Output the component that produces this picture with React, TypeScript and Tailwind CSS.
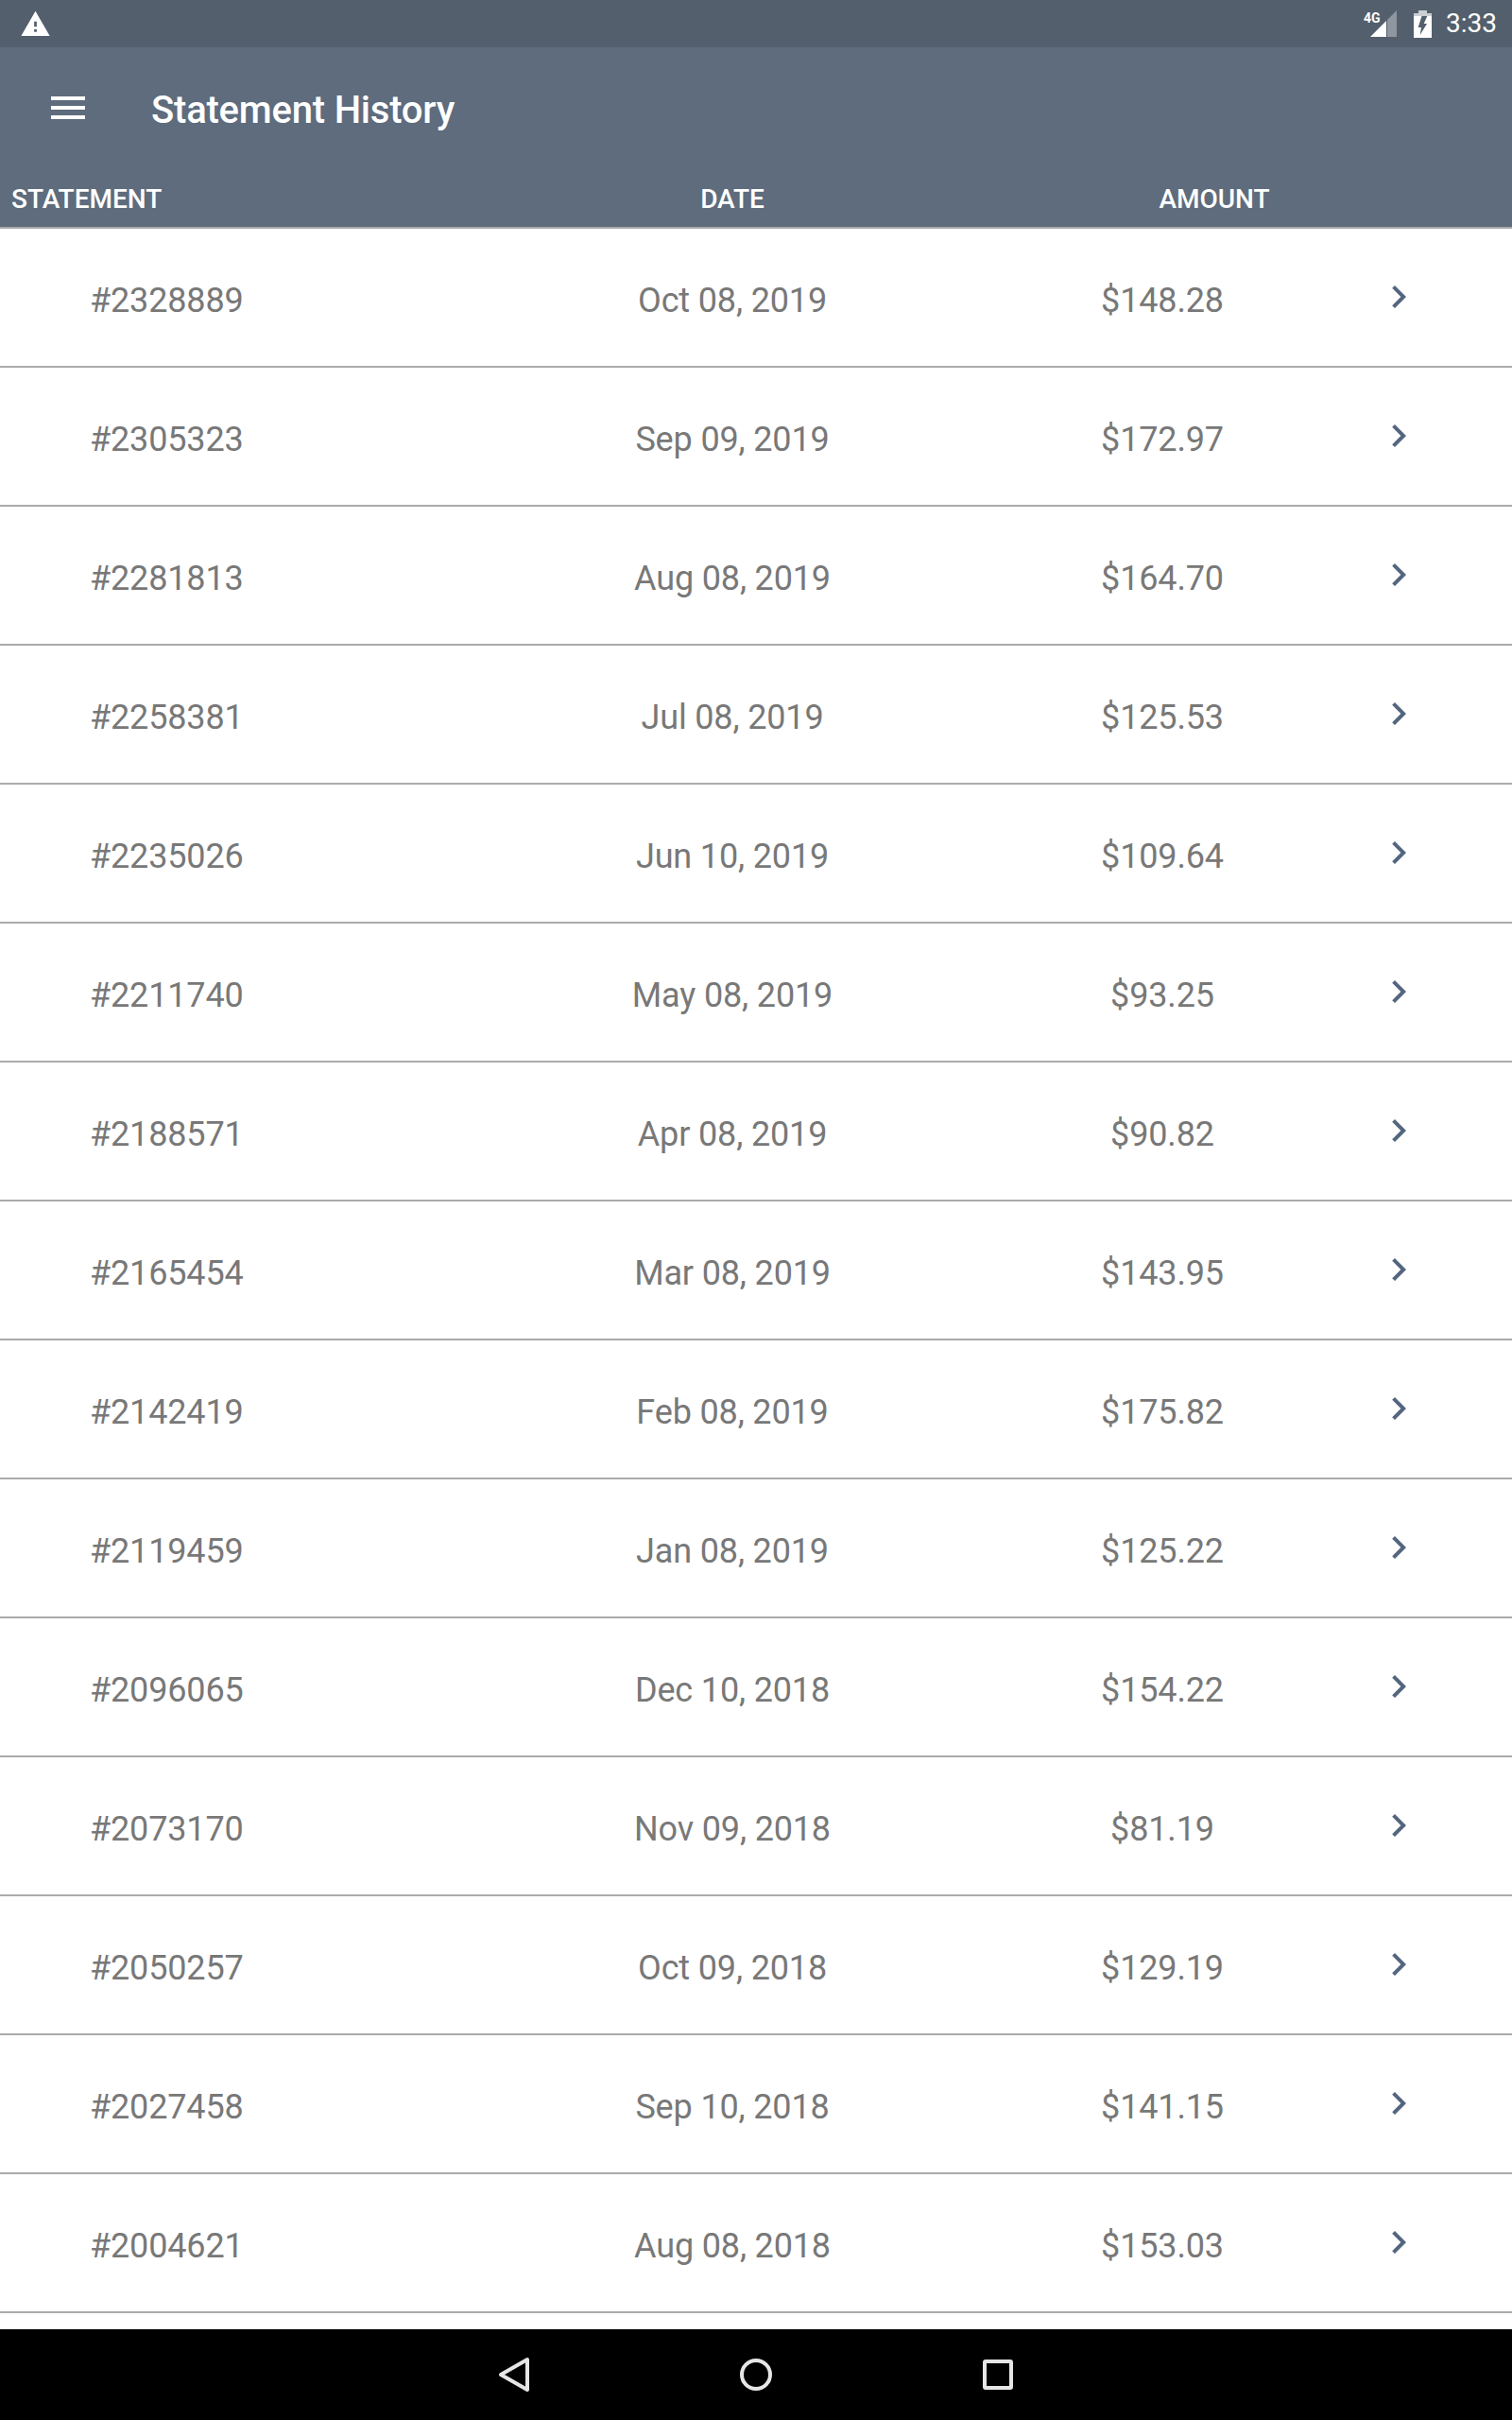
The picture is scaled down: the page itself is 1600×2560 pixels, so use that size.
const statements = [
  { id: "#2328889", date: "Oct 08, 2019", amount: "$148.28" },
  { id: "#2305323", date: "Sep 09, 2019", amount: "$172.97" },
  { id: "#2281813", date: "Aug 08, 2019", amount: "$164.70" },
  { id: "#2258381", date: "Jul 08, 2019", amount: "$125.53" },
  { id: "#2235026", date: "Jun 10, 2019", amount: "$109.64" },
  { id: "#2211740", date: "May 08, 2019", amount: "$93.25" },
  { id: "#2188571", date: "Apr 08, 2019", amount: "$90.82" },
  { id: "#2165454", date: "Mar 08, 2019", amount: "$143.95" },
  { id: "#2142419", date: "Feb 08, 2019", amount: "$175.82" },
  { id: "#2119459", date: "Jan 08, 2019", amount: "$125.22" },
  { id: "#2096065", date: "Dec 10, 2018", amount: "$154.22" },
  { id: "#2073170", date: "Nov 09, 2018", amount: "$81.19" },
  { id: "#2050257", date: "Oct 09, 2018", amount: "$129.19" },
  { id: "#2027458", date: "Sep 10, 2018", amount: "$141.15" },
  { id: "#2004621", date: "Aug 08, 2018", amount: "$153.03" },
];

function StatusBar() {
  return (
    <div className="flex h-[50px] items-center bg-[#535f6c] text-white">
      <svg viewBox="0 0 24 24" className="ml-[21px] h-[33px] w-[33px] fill-white">
        <path d="M1 21h22L12 2 1 21zm12-3h-2v-2h2v2zm0-4h-2v-4h2v4z" />
      </svg>
      <div className="ml-auto flex items-center">
        <div className="relative h-[28px] w-[28px]">
          <svg viewBox="0 0 28 28" className="h-[28px] w-[28px]">
            <polygon points="0,28 17,28 17,11" fill="#ffffff" />
            <polygon points="18,10 28,0 28,28 18,28" fill="#ffffff" fillOpacity="0.35" />
          </svg>
          <span className="absolute top-[0px] left-[-7px] text-[14px] leading-[16px] font-bold">4G</span>
        </div>
        <svg viewBox="0 0 19 29" className="ml-[18px] h-[29px] w-[19px]">
          <path fill="#ffffff" fillOpacity="0.7" d="M5 0h9v3h5v3H0V3h5z" />
          <path
            fill="#ffffff"
            fillRule="evenodd"
            d="M0 6h19v23H0zM8.5 6L4.7 18H8l-1.3 8L14 14h-3.3l3.6-8z"
          />
        </svg>
        <span className="mr-[16px] ml-[15px] text-[28px] leading-none">3:33</span>
      </div>
    </div>
  );
}

function Toolbar() {
  return (
    <div className="flex h-[128px] items-center bg-[#5e6c7d] text-white">
      <svg viewBox="0 0 24 24" className="ml-[48px] h-[48px] w-[48px] fill-white">
        <path d="M3 18h18v-2H3v2zm0-5h18v-2H3v2zm0-7v2h18V6H3z" />
      </svg>
      <h1 className="ml-[64px] pt-[6px] text-[40px] leading-none font-medium tracking-[-0.2px]">
        Statement History
      </h1>
    </div>
  );
}

function ColumnHeader() {
  return (
    <div className="flex h-[64px] items-center border-b-2 border-[#ababab] bg-[#5e6c7d] pt-[4px] text-[28px] leading-none font-medium text-white">
      <div className="w-[550px] pl-[12px]">STATEMENT</div>
      <div className="w-[450px] text-center">DATE</div>
      <div className="w-[570px] text-center">AMOUNT</div>
    </div>
  );
}

function Row({ id, date, amount }: { id: string; date: string; amount: string }) {
  return (
    <div className="flex h-[147px] items-center border-b-2 border-[#ababab] pt-[6px] text-[36px] leading-none tracking-[-0.15px] text-[#787878]">
      <div className="w-[550px] pl-[95px]">{id}</div>
      <div className="w-[450px] text-center">{date}</div>
      <div className="ml-[40px] w-[380px] text-center">{amount}</div>
      <svg viewBox="0 0 24 24" className="mt-[-7px] ml-[36px] h-[48px] w-[48px] fill-[#53667f]">
        <path d="M8.59 16.59L13.17 12 8.59 7.41 10 6l6 6-6 6z" />
      </svg>
    </div>
  );
}

function NavBar() {
  return (
    <div className="flex h-[96px] items-center justify-center bg-black">
      <div className="flex w-[256px] justify-center">
        <svg viewBox="0 0 48 48" className="h-[48px] w-[48px] fill-none stroke-[#e6e6e6] stroke-[4]">
          <path strokeLinejoin="round" d="M38 8L10 24l28 16z" />
        </svg>
      </div>
      <div className="flex w-[256px] justify-center">
        <svg viewBox="0 0 48 48" className="h-[48px] w-[48px] fill-none stroke-[#e6e6e6] stroke-[4]">
          <circle cx="24" cy="24" r="15" />
        </svg>
      </div>
      <div className="flex w-[256px] justify-center">
        <svg viewBox="0 0 48 48" className="h-[48px] w-[48px] fill-none stroke-[#e6e6e6] stroke-[4]">
          <rect x="10" y="10" width="28" height="28" rx="1" />
        </svg>
      </div>
    </div>
  );
}

export default function App() {
  return (
    <div className="flex h-[2560px] w-[1600px] flex-col bg-white [font-family:Roboto,sans-serif]">
      <StatusBar />
      <Toolbar />
      <ColumnHeader />
      <div className="flex-1 overflow-hidden">
        {statements.map((s) => (
          <Row key={s.id} {...s} />
        ))}
      </div>
      <NavBar />
    </div>
  );
}
